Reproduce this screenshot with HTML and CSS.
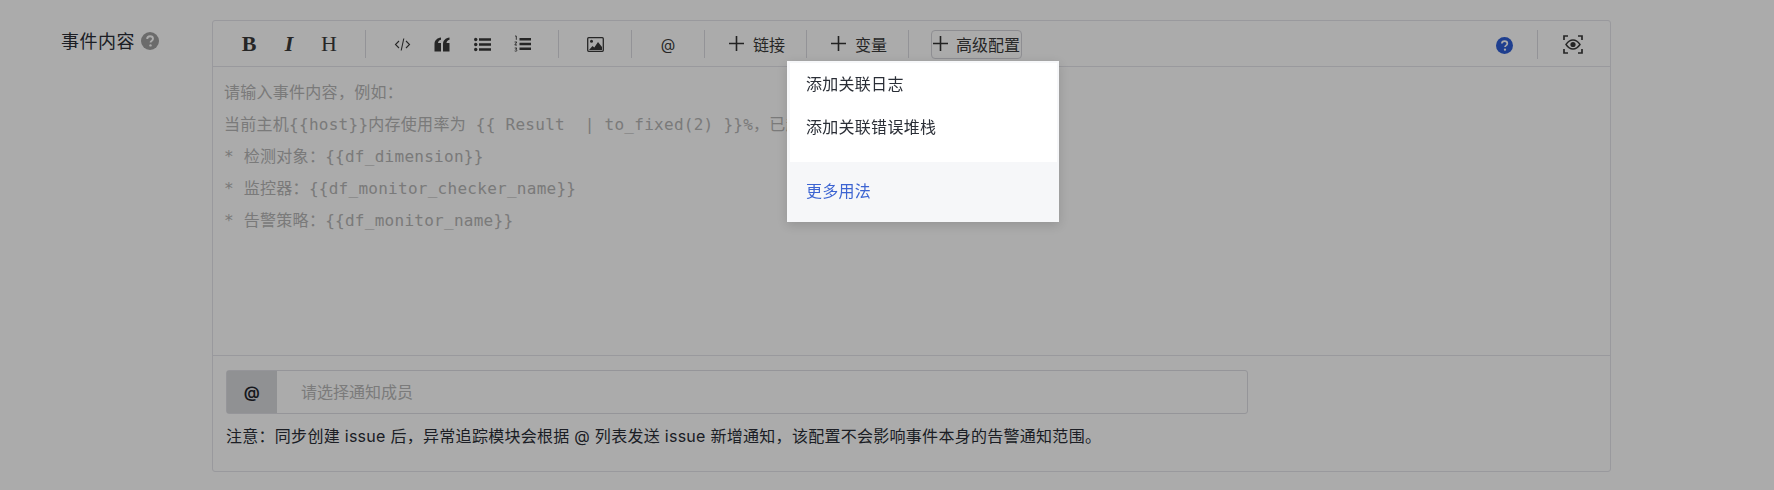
FILE: index.html
```html
<!DOCTYPE html>
<html lang="zh">
<head>
<meta charset="utf-8">
<title>事件内容</title>
<link rel="stylesheet" href="styles.css">
</head>
<body>
<main class="field">
  <div class="label">
    <span>事件内容</span>
    <svg class="hint" viewBox="0 0 18 18"><circle cx="9" cy="9" r="9" fill="#a0a0a0"/><path d="M6.200 7c0-1.700 1.200-2.700 2.900-2.700S12 5.300 12 6.800c0 1.200-.7 1.700-1.500 2.300-.7.500-.9.800-.9 1.500" fill="none" stroke="#fff" stroke-width="1.900"/><circle cx="9.500" cy="13.400" r="1.200" fill="#fff"/></svg>
  </div>
  <section class="editor">
    <div class="toolbar">
      <span class="tool serif bold">B</span>
      <span class="tool serif italic">I</span>
      <span class="tool serif">H</span>
      <i class="sep"></i>
      <span class="tool"><svg width="17" height="15" viewBox="0 0 17 15" fill="none" stroke="#3a3a3a" stroke-width="1.100"><path d="M5 4 1.500 7.500 5 11M12 4l3.500 3.500L12 11M9.800 1.500 7.200 13.500"/></svg></span>
      <span class="tool"><svg width="16" height="15" viewBox="0 0 16 15" fill="#3a3a3a"><path d="M7 .5v2.300C5 3.300 4.200 4.500 4 6h3v8.500H.5V7C.5 3.500 3 1 7 .5ZM15.500 .5v2.300c-2 .5-2.800 1.700-3 3.200h3v8.500H9V7C9 3.500 11.500 1 15.500 .5Z"/></svg></span>
      <span class="tool"><svg width="17" height="15" viewBox="0 0 17 15" fill="#3a3a3a"><circle cx="1.700" cy="2.500" r="1.700"/><circle cx="1.700" cy="7.500" r="1.700"/><circle cx="1.700" cy="12.500" r="1.700"/><path d="M5 1.300h12v2.400H5zM5 6.300h12v2.400H5zM5 11.300h12v2.400H5z"/></svg></span>
      <span class="tool"><svg width="17" height="18" viewBox="0 0 17 18" fill="#3a3a3a"><path d="M5.500 3h11.500v2.400H5.500zM5.500 7.800h11.500v2.400H5.500zM5.500 12.600h11.500V15H5.500z"/><path d="M1 1h1.300v3.800M.6 7h2.200L.8 10h2.200M.7 13h2.100l-1 1.500c1 0 1.300.6 1 1.200-.3.600-1.400.6-2.100.2" fill="none" stroke="#3a3a3a" stroke-width=".9"/></svg></span>
      <i class="sep"></i>
      <span class="tool"><svg width="17" height="15" viewBox="0 0 17 15"><rect x=".7" y=".7" width="15.600" height="13.600" rx="1" fill="none" stroke="#3a3a3a" stroke-width="1.300"/><circle cx="4.500" cy="4.200" r="1.500" fill="#3a3a3a"/><path d="M2 13l3.500-4 1.800 1.500L11 5l4 5v3z" fill="#3a3a3a"/></svg></span>
      <i class="sep"></i>
      <span class="tool at">@</span>
      <i class="sep"></i>
      <span class="tool text-tool"><svg class="plus" viewBox="0 0 15 15"><path d="M7.500 0v15M0 7.500h15"/></svg>链接</span>
      <i class="sep"></i>
      <span class="tool text-tool"><svg class="plus" viewBox="0 0 15 15"><path d="M7.500 0v15M0 7.500h15"/></svg>变量</span>
      <i class="sep"></i>
      <span class="tool text-tool active"><svg class="plus" viewBox="0 0 15 15"><path d="M7.500 0v15M0 7.500h15"/></svg>高级配置</span>
      <div class="toolbar-end">
        <svg class="help" viewBox="0 0 18 18"><circle cx="9" cy="9" r="9" fill="#2f5fd6"/><path d="M6.200 7c0-1.700 1.200-2.700 2.900-2.700S12 5.300 12 6.800c0 1.200-.7 1.700-1.500 2.300-.7.500-.9.800-.9 1.500" fill="none" stroke="#fff" stroke-width="1.800"/><circle cx="9.500" cy="13.400" r="1.200" fill="#fff"/></svg>
        <i class="sep"></i>
        <svg class="eye" width="20" height="19" viewBox="0 0 20 19" fill="none" stroke="#3a3a3a"><path d="M1 5V1h4M15 1h4v4M19 14v4h-4M5 18H1v-4" stroke-width="1.700"/><path d="M3 9.500C5 6.500 7.300 5 10 5s5 1.500 7 4.500c-2 3-4.300 4.500-7 4.500s-5-1.500-7-4.500Z" stroke-width="1.400"/><circle cx="10" cy="9.500" r="2.600" fill="#3a3a3a" stroke="none"/></svg>
      </div>
    </div>
    <div class="body">
      <p>请输入事件内容，例如：</p>
      <p>当前主机{{host}}内存使用率为 {{ Result  | to_fixed(2) }}%，已超过阈值</p>
      <p>* 检测对象：{{df_dimension}}</p>
      <p>* 监控器：{{df_monitor_checker_name}}</p>
      <p>* 告警策略：{{df_monitor_name}}</p>
    </div>
    <div class="foot">
      <div class="members"><span class="addon">@</span><span class="placeholder">请选择通知成员</span></div>
      <p class="note">注意：同步创建 issue 后，异常追踪模块会根据 @ 列表发送 issue 新增通知，该配置不会影响事件本身的告警通知范围。</p>
    </div>
  </section>
</main>
<div class="mask"></div>
<div class="menu">
  <ul class="menu-list">
    <li>添加关联日志</li>
    <li>添加关联错误堆栈</li>
  </ul>
  <a class="menu-foot">更多用法</a>
</div>
</body>
</html>
```
FILE: styles.css
```css
* { box-sizing: border-box; }
html, body { margin: 0; height: 100%; overflow: hidden; background: #fff; }
body { font-family: Inter, "Noto Sans CJK SC", sans-serif; color: #2a2e36; letter-spacing: .28px; }
p { margin: 0; }

.field { display: flex; padding: 20px 0 0 61px; }
.label { width: 151px; flex: none; display: flex; align-items: center; gap: 6px; height: 40px; font-size: 18px; letter-spacing: .5px; }
.hint { width: 18px; height: 18px; margin-top: 2px; }

.editor { width: 1399px; height: 452px; border: 1px solid #e4e4ea; border-radius: 3px; display: flex; flex-direction: column; }
.toolbar { height: 46px; flex: none; display: flex; align-items: center; padding: 1px 16px 0; border-bottom: 1px solid #e4e4ea; }
.tool { width: 40px; height: 29px; display: flex; align-items: center; justify-content: center; color: #3a3a3a; letter-spacing: 0; }
.serif { font-family: "Liberation Serif", serif; font-size: 22px; }
.bold { font-weight: 700; }
.italic { font-style: italic; font-weight: 700; }
.at { font-size: 15px; font-weight: 400; }
.sep { width: 1px; height: 28px; margin: 0 16px; background: #dcdce2; flex: none; }
.text-tool { width: auto; gap: 9px; padding: 0 5px 0 8px; font-size: 16px; justify-content: flex-start; white-space: nowrap; }
.plus { width: 15px; height: 15px; flex: none; margin-top: -2px; fill: none; stroke: #333; stroke-width: 1.600; }
.active { margin-left: 6px; gap: 8px; border: 1px solid #d4d4da; border-radius: 4px; padding: 0 1px; }
.toolbar-end { margin-left: auto; display: flex; align-items: center; padding-right: 11px; }
.help { width: 17px; height: 17px; margin-top: 2px; }
.toolbar-end .sep { height: 29px; margin: 0 25px 0 24px; }

.body { flex: 1; padding: 10px 11px; font-family: "DejaVu Sans Mono", "Noto Sans CJK SC", monospace; font-size: 16px; line-height: 32px; color: #b6b6b6; overflow: hidden; letter-spacing: .27px; }
.body p { white-space: pre; }

.foot { flex: none; height: 116px; padding: 14px 13px 0; border-top: 1px solid #e4e4ea; }
.members { width: 1022px; height: 44px; display: flex; border: 1px solid #dedee4; border-radius: 3px; }
.addon { width: 50px; display: flex; align-items: center; justify-content: center; background: #d7d8dc; font-size: 16px; font-weight: 600; color: #22252b; }
.placeholder { padding-left: 24px; line-height: 42px; font-size: 16px; color: #b8b8b8; letter-spacing: 0; }
.note { margin-top: 9px; font-size: 16px; line-height: 26px; white-space: nowrap; }

.mask { position: fixed; inset: 0; background: rgba(0, 0, 0, .33); }

.menu { position: absolute; left: 787px; top: 61px; width: 272px; height: 161px; display: flex; flex-direction: column; background: #f6f7f9; padding: 2px 2px 0 3px; box-shadow: 0 3px 10px rgba(0, 0, 0, .14); font-size: 16px; }
.menu-list { list-style: none; margin: 0; padding: 0 0 13px; background: #fff; }
.menu-list li { height: 43px; line-height: 43px; padding-left: 16px; color: #2a2e36; }
.menu-foot { flex: 1; display: flex; align-items: center; padding: 0 0 4px 16px; color: #3c64d2; }
```
